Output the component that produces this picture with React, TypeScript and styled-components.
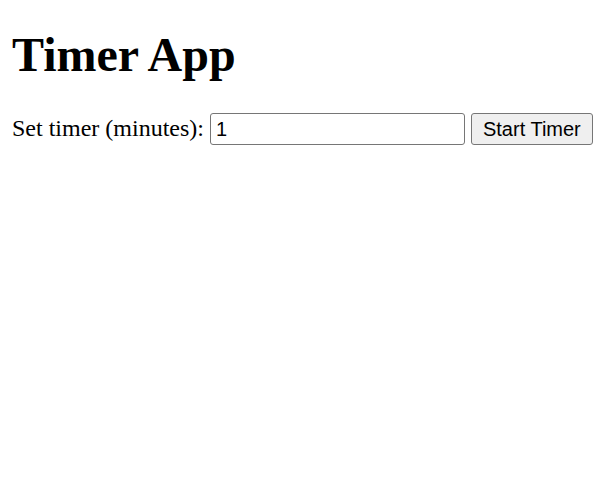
import React, { useState } from "react";
import styled, { createGlobalStyle } from "styled-components";

const GlobalStyle = createGlobalStyle`
  html, body {
    margin: 0;
    padding: 0;
    background: #ffffff;
  }
  body {
    font-family: "Liberation Serif", "Times New Roman", serif;
    font-size: 24px;
    color: #000000;
  }
`;

const Page = styled.div`
  padding: 27px 12px 12px 12px;
`;

const Title = styled.h1`
  font-family: "Liberation Serif", "Times New Roman", serif;
  font-size: 48px;
  font-weight: bold;
  margin: 0 0 31px 0;
`;

const Row = styled.div`
  font-size: 24px;
`;

const Label = styled.label`
  font-family: "Liberation Serif", "Times New Roman", serif;
`;

const Input = styled.input`
  font-family: "Liberation Sans", Arial, sans-serif;
  font-size: 20px;
  width: 243px;
  height: 30px;
  padding: 0 5px;
  border: 1px solid #767676;
  border-radius: 3px;
  box-sizing: content-box;
  color: #000;
  background: #fff;
  margin: 0;
`;

const Button = styled.button`
  font-family: "Liberation Sans", Arial, sans-serif;
  font-size: 20px;
  height: 32px;
  padding: 1px 11px;
  border: 1px solid #767676;
  border-radius: 3px;
  background: #efefef;
  color: #000;
  margin: 0;
`;

export default function App() {
  const [minutes, setMinutes] = useState("1");
  return (
    <>
      <GlobalStyle />
      <Page>
        <Title>Timer App</Title>
        <Row>
          <Label htmlFor="minutes">Set timer (minutes):</Label>{" "}
          <Input
            id="minutes"
            type="number"
            value={minutes}
            onChange={(e) => setMinutes(e.target.value)}
          />{" "}
          <Button type="button">Start Timer</Button>
        </Row>
      </Page>
    </>
  );
}
